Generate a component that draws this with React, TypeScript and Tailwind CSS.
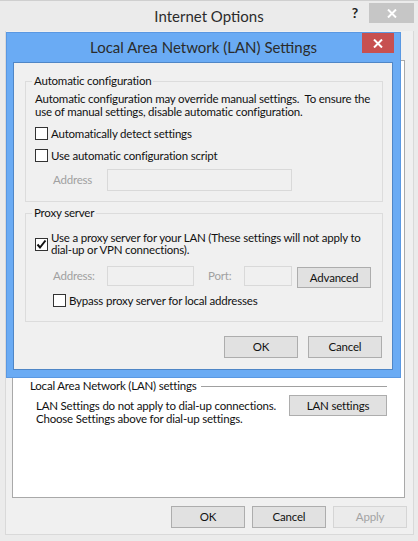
import React from "react";

function CloseX() {
  return (
    <svg width="10" height="9" viewBox="0 0 10 9">
      <path d="M1 0.5 L9 8.5 M9 0.5 L1 8.5" stroke="#ffffff" strokeWidth="2" fill="none" />
    </svg>
  );
}

function Checkbox({ checked = false }: { checked?: boolean }) {
  return (
    <div className="w-[13px] h-[13px] shrink-0 border border-[#333333] bg-white flex items-center justify-center">
      {checked && (
        <svg width="11" height="11" viewBox="0 0 11 11">
          <path d="M1.5 5.5 L4 8.5 L9.5 1.5" stroke="#111111" strokeWidth="2" fill="none" />
        </svg>
      )}
    </div>
  );
}

function Btn({
  children,
  className = "",
}: {
  children: React.ReactNode;
  className?: string;
}) {
  return (
    <div
      className={
        "flex items-center justify-center border bg-[#e1e1e1] border-[#adadad] text-[#111111] " +
        className
      }
    >
      {children}
    </div>
  );
}

export default function App() {
  return (
    <div className="relative w-[418px] h-[541px] overflow-hidden bg-[#ebebeb] font-['Segoe_UI','Lato','Noto_Sans',sans-serif] text-[11.5px] tracking-[-0.2px] text-[#111111]">
      {/* Outer window: Internet Options */}
      <div className="flex flex-col h-full border-t border-[#cfcfcf]">
        <div className="h-[30px] shrink-0 grid grid-cols-[1fr_auto_1fr]">
          <div />
          <div className="text-[15px] tracking-normal leading-[20px] text-[#2b2b2b] pt-[5px]">Internet Options</div>
          <div className="flex justify-end items-start pr-[4px] pt-[2px]">
            <span className="font-bold text-[14px] leading-[16px] mt-[2px] mr-[11px] text-[#222]">?</span>
            <div className="w-[45px] h-[20px] bg-[#c6c6c6] flex items-center justify-center">
              <CloseX />
            </div>
          </div>
        </div>
        <div className="ml-[5px] mr-[4px] mb-[6px] flex-1 border-x border-b border-[#d9d9d9] bg-[#f0f0f0] flex flex-col">
          <div className="ml-[6px] mr-[8px] mt-[29px] flex-1 bg-white border border-[#a9a9a9] pt-[318px] pl-[17px] pr-[17px]">
            <div className="flex items-center h-[14px]">
              <span className="leading-[14px] whitespace-nowrap">Local Area Network (LAN) settings</span>
              <div className="flex-1 ml-[5px] h-px bg-[#a0a0a0]" />
            </div>
            <div className="flex items-start justify-between pl-[6px] mt-[2px]">
              <div className="leading-[13px] mt-[4px] whitespace-nowrap">
                LAN Settings do not apply to dial-up connections.
                <br />
                Choose Settings above for dial-up settings.
              </div>
              <Btn className="w-[98px] h-[21px]">LAN settings</Btn>
            </div>
          </div>
          <div className="flex justify-end gap-[7px] pr-[6px] mt-[8px] mb-[6px]">
            <Btn className="w-[74px] h-[22px]">OK</Btn>
            <Btn className="w-[74px] h-[22px]">Cancel</Btn>
            <div className="w-[74px] h-[22px] flex items-center justify-center border border-[#d5d5d5] bg-[#ebebeb] text-[#a3a3a3]">
              Apply
            </div>
          </div>
        </div>
      </div>

      {/* LAN Settings dialog window */}
      <div className="absolute left-[6px] top-[32px] w-[395px] h-[346px] bg-[#6aabf4] border border-[#5a98e2] flex flex-col">
        <div className="relative h-[29px] shrink-0 flex justify-center">
          <span className="text-[15px] tracking-normal leading-[20px] text-[#2b2b2b] pt-[4px]">Local Area Network (LAN) Settings</span>
          <div className="absolute right-[6px] top-0 w-[32px] h-[20px] bg-[#c75050] flex items-center justify-center">
            <CloseX />
          </div>
        </div>
        <div className="ml-[6px] mr-[7px] mb-[7px] flex-1 bg-[#f0f0f0] border border-[#4f86c6] flex flex-col">
          {/* Automatic configuration */}
          <fieldset className="min-w-0 ml-[11px] mr-[9px] mt-[11px] border border-[#dcdcdc] pl-[6px] pr-[6px] pb-[10px]">
            <legend className="px-[2px] leading-[14px]">Automatic configuration</legend>
            <div className="pl-[3px] pt-[4px]">
              <div className="leading-[13px] whitespace-nowrap">
                Automatic configuration may override manual settings.&nbsp; To ensure the
                <br />
                use of manual settings, disable automatic configuration.
              </div>
              <div className="flex items-center gap-[3px] mt-[9px] h-[13px]">
                <Checkbox />
                <span className="leading-[13px]">Automatically detect settings</span>
              </div>
              <div className="flex items-center gap-[3px] mt-[9px] h-[13px]">
                <Checkbox />
                <span className="leading-[13px]">Use automatic configuration script</span>
              </div>
              <div className="flex items-center mt-[7px]">
                <span className="ml-[18px] w-[54px] text-[#a0a0a0]">Address</span>
                <div className="w-[185px] h-[22px] border border-[#d9d9d9] bg-[#f0f0f0]" />
              </div>
            </div>
          </fieldset>

          {/* Proxy server */}
          <fieldset className="min-w-0 ml-[11px] mr-[9px] mt-[4px] border border-[#dcdcdc] pl-[6px] pr-[6px] pb-[14px]">
            <legend className="px-[2px] leading-[14px]">Proxy server</legend>
            <div className="pl-[3px] pt-[12px]">
              <div className="flex items-center gap-[3px]">
                <Checkbox checked />
                <span className="leading-[12px] whitespace-nowrap">
                  Use a proxy server for your LAN (These settings will not apply to
                  <br />
                  dial-up or VPN connections).
                </span>
              </div>
              <div className="flex items-start mt-[10px]">
                <span className="ml-[18px] w-[54px] h-[20px] flex items-center text-[#a0a0a0]">Address:</span>
                <div className="w-[87px] h-[20px] border border-[#d9d9d9] bg-[#f0f0f0]" />
                <span className="ml-[14px] w-[36px] h-[20px] flex items-center text-[#a0a0a0]">Port:</span>
                <div className="w-[48px] h-[20px] border border-[#d9d9d9] bg-[#f0f0f0]" />
                <Btn className="ml-[5px] mt-[1px] w-[74px] h-[21px]">Advanced</Btn>
              </div>
              <div className="flex items-center gap-[3px] mt-[6px] ml-[18px] h-[13px]">
                <Checkbox />
                <span className="leading-[13px]">Bypass proxy server for local addresses</span>
              </div>
            </div>
          </fieldset>

          <div className="flex justify-end gap-[10px] mr-[10px] mt-[14px]">
            <Btn className="w-[74px] h-[22px] border-[#5b9fe3]">OK</Btn>
            <Btn className="w-[74px] h-[22px]">Cancel</Btn>
          </div>
        </div>
      </div>
    </div>
  );
}
